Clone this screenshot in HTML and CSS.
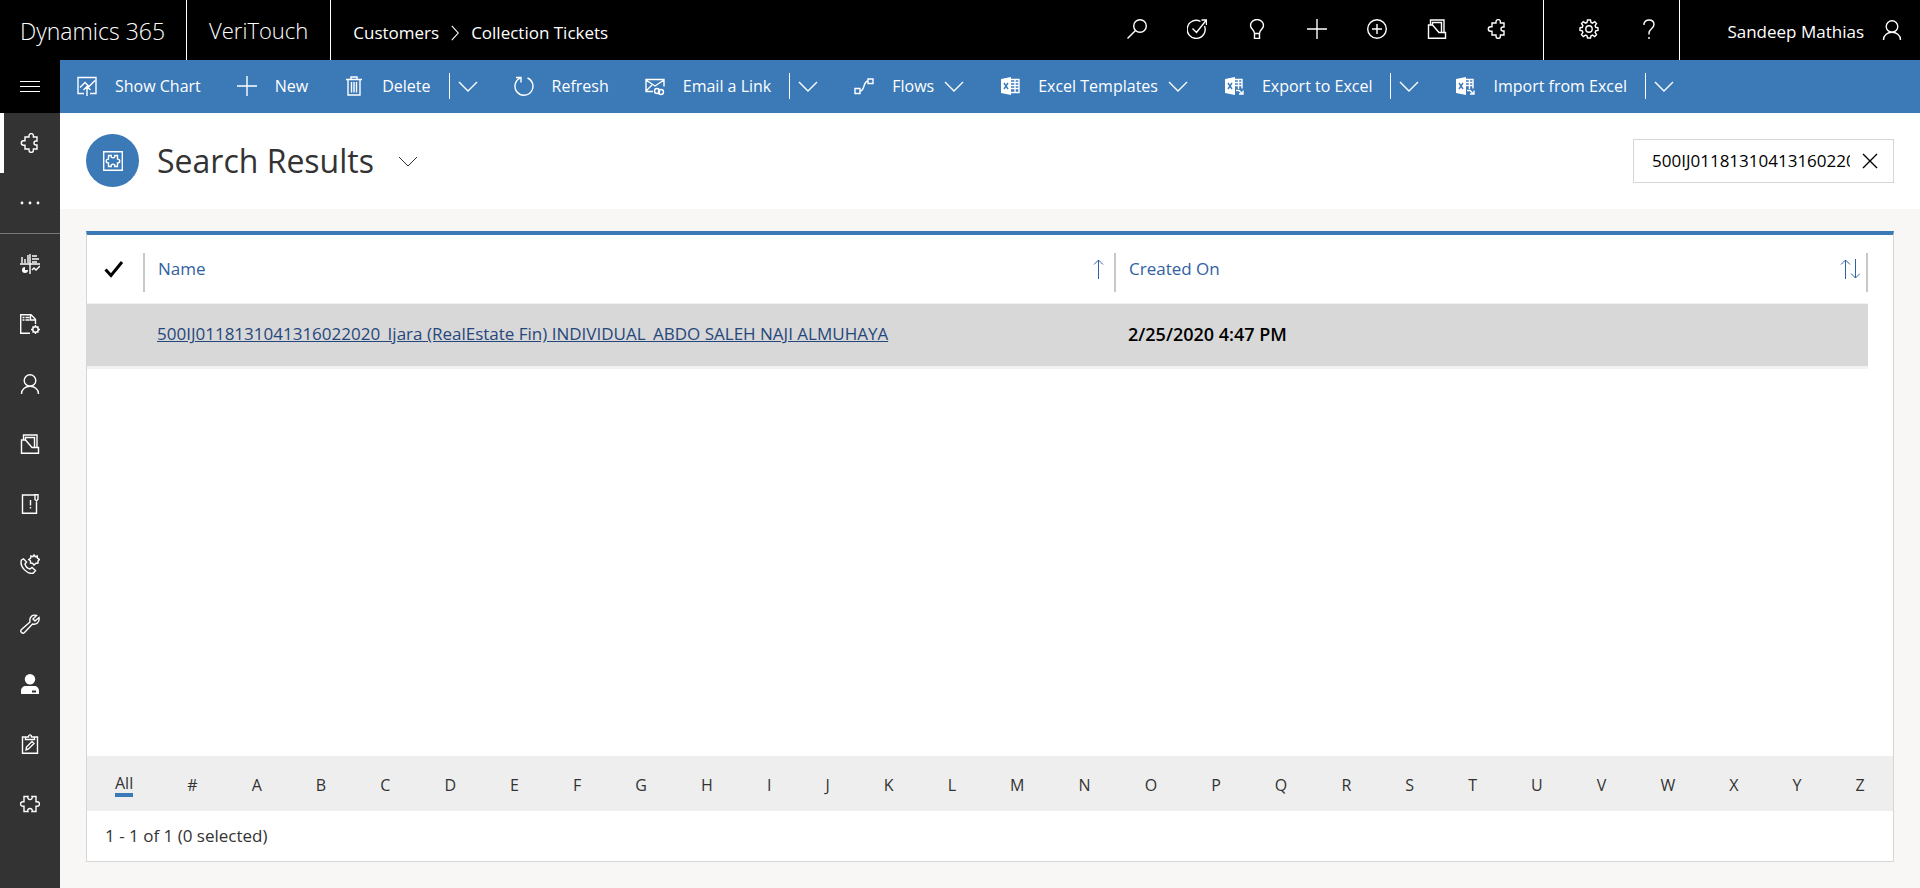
FILE: index.html
```html
<!DOCTYPE html>
<html lang="en"><head><meta charset="utf-8"><title>Collection Tickets</title><link rel="stylesheet" href="styles.css"></head>
<body>
<svg class="defs" aria-hidden="true"><defs>
<symbol id="search" viewBox="0 0 20 20"><circle cx="13" cy="7" r="6.300"/><path d="M8.500 11.500 .5 19.500"/></symbol>
<symbol id="task" viewBox="0 0 20 20"><path d="M17.500 7a9 9 0 1 1-4-4.500M5.500 9.500l4 4L19 1.500M14.500 1h5v5"/></symbol>
<symbol id="bulb" viewBox="0 0 20 20"><path d="M7.500 14.500c0-4-4-4.500-4-8a6.500 6 0 0 1 13 0c0 3.500-4 4-4 8zM7.500 14.500v5h5v-5"/></symbol>
<symbol id="plus" viewBox="0 0 20 20"><path d="M10 0v20M0 10h20"/></symbol>
<symbol id="pluscircle" viewBox="0 0 20 20"><circle cx="10" cy="10" r="9.300"/><path d="M10 5v10M5 10h10"/></symbol>
<symbol id="folder" viewBox="0 0 20 20"><path d="M1.500 19.300V6h4l6.500 7.500h6.500v5.800zM3.500 6V1h13.500v12.500M5.500 6V3.500h9v10"/></symbol>
<symbol id="puzzle" viewBox="0 0 20 20"><path d="M5 4h4V2.800a2.200 2.200 0 0 1 4.400 0V4H17v4h-1a2 2 0 0 0 0 4h1v4h-3.600v1.200a2.200 2.200 0 0 1-4.400 0V16H5v-3.800H3.500a2.200 2.200 0 0 1 0-4.400H5z"/></symbol>
<symbol id="puzzle2" viewBox="0 0 20 20"><path d="M4 2.500h4c-1.500 4 5.500 4 4 0h4v5.200h1.200a2.300 2.300 0 0 1 0 4.600H16v5.200h-4c1.500-4-5.500-4-4 0H4v-5.200H2.800a2.300 2.300 0 0 1 0-4.600H4z"/></symbol>
<symbol id="gear" viewBox="0 0 20 20"><path d="M8.500 1h3l.5 2.500 1.500.6 2.200-1.400 1.800 1.800-1.400 2.200.7 1.600 2.200.5v2.600l-2.300.5-.6 1.600 1.400 2.200-1.800 1.800-2.200-1.400-1.500.7-.5 2.200h-3L8 16.800l-1.500-.7-2.200 1.400-1.800-1.800 1.400-2.200-.6-1.600L1 11.400V8.800l2.300-.5.6-1.600-1.400-2.200 1.800-1.800 2.200 1.400L8 3.500z"/><circle cx="10" cy="10" r="3.200"/></symbol>
<symbol id="help" viewBox="0 0 20 20"><path d="M5 6V4.500C6 1.500 8 1 10 1c3 0 5 1.500 5 4.500 0 4-5 4.500-5 8.500v1.500M10 18v2"/></symbol>
<symbol id="person" viewBox="0 0 20 20"><circle cx="10" cy="6.500" r="5.800"/><path d="M1.500 20c0-10.300 17-10.300 17 0"/></symbol>
<symbol id="chart" viewBox="0 0 20 20"><path d="M7 17.500H1v-16h18v16h-6M3 11.500l5-5 4 4 6-6M10 20v-9M6.500 14 10 10.500l3.500 3.500"/></symbol>
<symbol id="trash" viewBox="0 0 20 20"><path d="M2 3.500h16M7 3V1h6v2M4 4v15h12V4M7.500 6v10.500M10 6v10.500M12.500 6v10.500"/></symbol>
<symbol id="refresh" viewBox="0 0 20 20"><path d="M13.500 2A9 9 0 1 1 6 2.200M2 1.500h5v5"/></symbol>
<symbol id="mail" viewBox="0 0 20 20"><path d="M8 15.500H1v-12h18v7M1 4l9 6 9-6M1 15l6-6M5 3.500h14"/><circle cx="12" cy="15" r="2.500"/><circle cx="16" cy="16" r="2.500"/></symbol>
<symbol id="flow" viewBox="0 0 20 20"><path d="M1 12.500h5v5H1zM14 3h5v4.500h-5zM6 15c5 0 3-10 8-10"/></symbol>
<symbol id="excel" viewBox="0 0 20 20"><path class="solid" d="M1 3 11 1v18L1 17z"/><path d="M11 3.500h8v13h-8M11 6.500h8M11 9.500h8M11 12.500h8M15 3v13"/><path class="cut" d="m4 7 4 6M8 7l-4 6"/></symbol>
<symbol id="excelio" viewBox="0 0 20 20"><path class="solid" d="M1 3 11 1v18L1 17z"/><path d="M11 3.500h7v9M11 6.500h7M11 9.500h7M14.500 3v10M12 14.500h3l3.500 3.500M19 14.500V18h-4"/><path class="cut" d="m4 7 4 6M8 7l-4 6"/></symbol>
<symbol id="down" viewBox="0 0 20 20"><path d="m1 6 9 9 9-9"/></symbol>
<symbol id="right" viewBox="0 0 20 20"><path d="m6 1 8 9-8 9"/></symbol>
<symbol id="menu" viewBox="0 0 20 20"><path d="M0 4.500h20M0 9.500h20M0 14.500h20"/></symbol>
<symbol id="dots" viewBox="0 0 20 20"><g class="solid"><circle cx="2" cy="10" r="1.400"/><circle cx="10" cy="10" r="1.400"/><circle cx="18" cy="10" r="1.400"/></g></symbol>
<symbol id="dash" viewBox="0 0 20 20"><path d="M10 0v20M0 10h20M2 9V3M5 9V5M8 9V1M12 2h5M12 5h7M12 8h5M12 16l2-2 2 2 4-4"/><path class="solid" d="M5 13a3 3 0 1 0 3 3H5z"/></symbol>
<symbol id="docgear" viewBox="0 0 20 20"><path d="M10 19.300H.7V.7H11l4.500 4.500V10M10.500 1v5H15M2.500 3.500h2M5.500 3.500h4M2.500 6h2M5.500 6h4"/><circle cx="15.500" cy="15.500" r="2.700"/><path d="M15.500 11v2M15.500 18v2M11 15.500h2M18 15.500h2M12.500 12.500l1 1M17.500 17.500l1 1M18.500 12.500l-1 1M13.500 17.500l-1 1"/></symbol>
<symbol id="note" viewBox="0 0 20 20"><path d="M15 1H2.500v18.300h14V8M15 .7h3v4.500L16.500 7 15 5.500zM10.500 6v5.500M10.500 13v1.500"/></symbol>
<symbol id="phone" viewBox="0 0 20 20"><path d="m1.500 6 2-1.200L6.500 8 5 10c.5 2 2.500 4.500 5 5l2-1.500 3.500 3-2 2.500C8 21-1 13 1.500 6zM14 1l1.200 1.700 2-.7.2 2 2 1.500L18 7v2l-2 .2L14 11l-1.500-1.800-2-.2V7L8.800 5.500l1.900-1.400.2-2.100 2 .7z"/></symbol>
<symbol id="wrench" viewBox="0 0 20 20"><path d="M16.500 1.500 13 5l2 2 4-3.500c1 5-3 7.500-6.500 6.500L4.500 18.500c-2 2-5-1-3-3L10 8C9 3 12.500.2 16.500 1.500z"/></symbol>
<symbol id="user" viewBox="0 0 20 20"><path class="solid" fill-rule="evenodd" d="M10 0a5 5 0 1 1 0 10.500A5 5 0 0 1 10 0zM1 20v-3c0-3 2-5 5-5h8c3 0 5 2 5 5v3zM12 16.500V18.500h4v-2z"/></symbol>
<symbol id="clip" viewBox="0 0 20 20"><path d="M6 3H2.500v16.300h15V3H14M5.500 5.500V3h3C8.500.2 11.500.2 11.500 3h3v2.500zM6 16l.5-3 5.500-5.500 2 2L8.500 15z"/></symbol>
<symbol id="entity" viewBox="0 0 20 20"><path d="M.7.700h18.600v18.600H.7zM5.500 4.500h2.700c-1 3 4.600 3 3.600 0h2.700v3.600c3 0 3 3.800 0 3.800v3.600h-2.700c1-3-4.600-3-3.600 0H5.500v-3.600c-3 0-3-3.800 0-3.800z"/></symbol>
<symbol id="close" viewBox="0 0 20 20"><path d="m3 3 14 14M17 3 3 17"/></symbol>
<symbol id="check" viewBox="0 0 20 20"><path d="m1.500 10.500 5.500 6L18 3"/></symbol>
<symbol id="asc" viewBox="0 0 20 20"><path d="M10.500 20V1M6 5.500 10.500 1 15 5.500"/></symbol>
<symbol id="sort" viewBox="0 0 20 20"><path d="M5.500 20V1M1 5.500 5.500 1 10 5.500M15.500 0v19M11 14.500l4.500 4.500 4.500-4.500"/></symbol>
</defs></svg>
<header class="topbar">
<a class="brand" href="#">Dynamics 365</a><a class="app" href="#">VeriTouch</a>
<nav class="crumbs" aria-label="Breadcrumb"><a href="#">Customers</a><svg class="icon small"><use href="#right"/></svg><a href="#">Collection Tickets</a></nav>
<div class="tools">
<button aria-label="Search"><svg class="icon"><use href="#search"/></svg></button><button aria-label="Tasks"><svg class="icon"><use href="#task"/></svg></button><button aria-label="Ideas"><svg class="icon"><use href="#bulb"/></svg></button><button aria-label="Create"><svg class="icon"><use href="#plus"/></svg></button><button aria-label="Quick create"><svg class="icon"><use href="#pluscircle"/></svg></button><button aria-label="Cases"><svg class="icon"><use href="#folder"/></svg></button><button aria-label="Extensions"><svg class="icon"><use href="#puzzle"/></svg></button>
</div>
<div class="tools settings"><button aria-label="Settings"><svg class="icon"><use href="#gear"/></svg></button><button aria-label="Help"><svg class="icon"><use href="#help"/></svg></button></div>
<button class="account"><span>Sandeep Mathias</span><svg class="icon"><use href="#person"/></svg></button>
</header>
<div class="shell">
<nav class="rail" aria-label="Site map">
<button class="menu" aria-label="Menu"><svg class="icon thin"><use href="#menu"/></svg></button>
<a class="active" href="#" aria-label="Collection tickets"><svg class="icon"><use href="#puzzle"/></svg></a>
<a class="more" href="#" aria-label="More"><svg class="icon"><use href="#dots"/></svg></a>
<a href="#" aria-label="Dashboards"><svg class="icon"><use href="#dash"/></svg></a>
<a href="#" aria-label="Templates"><svg class="icon"><use href="#docgear"/></svg></a>
<a href="#" aria-label="Contacts"><svg class="icon"><use href="#person"/></svg></a>
<a href="#" aria-label="Accounts"><svg class="icon"><use href="#folder"/></svg></a>
<a href="#" aria-label="Alerts"><svg class="icon"><use href="#note"/></svg></a>
<a href="#" aria-label="Calls"><svg class="icon"><use href="#phone"/></svg></a>
<a href="#" aria-label="Service"><svg class="icon"><use href="#wrench"/></svg></a>
<a href="#" aria-label="Users"><svg class="icon"><use href="#user"/></svg></a>
<a href="#" aria-label="Surveys"><svg class="icon"><use href="#clip"/></svg></a>
<a href="#" aria-label="Add-ons"><svg class="icon"><use href="#puzzle2"/></svg></a>
</nav>
<div class="content">
<div class="commands" role="toolbar" aria-label="Commands">
<button class="cmd"><svg class="icon"><use href="#chart"/></svg>Show Chart</button>
<button class="cmd"><svg class="icon"><use href="#plus"/></svg>New</button>
<div class="split"><button class="cmd"><svg class="icon"><use href="#trash"/></svg>Delete</button><button class="drop" aria-label="Delete options"><svg class="icon"><use href="#down"/></svg></button></div>
<button class="cmd"><svg class="icon"><use href="#refresh"/></svg>Refresh</button>
<div class="split"><button class="cmd"><svg class="icon"><use href="#mail"/></svg>Email a Link</button><button class="drop" aria-label="Email options"><svg class="icon"><use href="#down"/></svg></button></div>
<button class="cmd"><svg class="icon"><use href="#flow"/></svg>Flows<svg class="icon caret"><use href="#down"/></svg></button>
<button class="cmd"><svg class="icon"><use href="#excel"/></svg>Excel Templates<svg class="icon caret"><use href="#down"/></svg></button>
<div class="split"><button class="cmd"><svg class="icon"><use href="#excelio"/></svg>Export to Excel</button><button class="drop" aria-label="Export options"><svg class="icon"><use href="#down"/></svg></button></div>
<div class="split"><button class="cmd"><svg class="icon"><use href="#excelio"/></svg>Import from Excel</button><button class="drop" aria-label="Import options"><svg class="icon"><use href="#down"/></svg></button></div>
</div>
<div class="heading">
<span class="badge"><svg class="icon"><use href="#entity"/></svg></span>
<h1>Search Results</h1><button class="view" aria-label="Change view"><svg class="icon thin"><use href="#down"/></svg></button>
<div class="find"><input type="text" aria-label="Search records" value="500IJ0118131041316022020"><button aria-label="Clear search"><svg class="icon"><use href="#close"/></svg></button></div>
</div>
<main class="panel">
<div class="gridwrap"><table class="grid">
<thead><tr><th class="pick"><div class="head"><svg class="icon tick"><use href="#check"/></svg></div></th><th class="name"><div class="head">Name<svg class="icon thin"><use href="#asc"/></svg></div></th><th><div class="head">Created On<svg class="icon thin"><use href="#sort"/></svg></div></th></tr></thead>
<tbody><tr><td></td><td><a href="#">500IJ0118131041316022020_Ijara (RealEstate Fin) INDIVIDUAL_ABDO SALEH NAJI ALMUHAYA</a></td><td class="date">2/25/2020 4:47 PM</td></tr></tbody>
</table></div>
<nav class="letters" aria-label="Filter by letter"><a class="on" href="#">All</a><a href="#">#</a><a href="#">A</a><a href="#">B</a><a href="#">C</a><a href="#">D</a><a href="#">E</a><a href="#">F</a><a href="#">G</a><a href="#">H</a><a href="#">I</a><a href="#">J</a><a href="#">K</a><a href="#">L</a><a href="#">M</a><a href="#">N</a><a href="#">O</a><a href="#">P</a><a href="#">Q</a><a href="#">R</a><a href="#">S</a><a href="#">T</a><a href="#">U</a><a href="#">V</a><a href="#">W</a><a href="#">X</a><a href="#">Y</a><a href="#">Z</a></nav>
<div class="status">1 - 1 of 1 (0 selected)</div>
</main>
</div>
</div>
</body></html>
```
FILE: styles.css
```css
* { box-sizing: border-box; }
body { margin: 0; min-height: 100vh; display: flex; flex-direction: column; background: #f8f7f5; color: #333; font: 17px/24px "Open Sans", "Noto Sans", sans-serif; }
button, input { font: inherit; color: inherit; background: none; border: 0; padding: 0; margin: 0; }
a { color: inherit; text-decoration: none; }
.defs { position: absolute; width: 0; height: 0; }
.icon { width: 20px; height: 20px; flex: none; fill: none; stroke: currentColor; stroke-width: 1.4; }
.icon.small { width: 16px; height: 16px; }
.icon.thin { stroke-width: 1; }
.solid { fill: currentColor; stroke: none; }
.cut { stroke: #3b79b7; }

.topbar { height: 60px; display: flex; background: #000; color: #fff; }
.brand, .app { display: flex; align-items: center; border-right: 1px solid #fff; font-weight: 300; }
.brand { padding: 2px 21px 0 20px; font-size: 23px; }
.app { padding: 0 22px; font-size: 22px; }
.crumbs { display: flex; align-items: center; gap: 8px; padding: 6px 0 0 22px; }
.tools { display: flex; margin-left: auto; padding-right: 16px; }
.tools button { width: 60px; height: 58px; display: grid; place-items: center; }
.settings { margin-left: 0; padding: 0 0 0 15px; border-left: 1px solid #fff; border-right: 1px solid #fff; }
.account { display: flex; align-items: center; gap: 18px; padding: 0 18px 0 47px; }
.account span { padding-top: 4px; }

.shell { flex: 1; display: flex; }
.rail { width: 60px; flex: none; background: #333; color: #fff; }
.rail a { height: 60px; display: grid; place-items: center; }
.rail .menu { width: 60px; height: 53px; display: grid; place-items: center; background: #000; }
.rail .active { border-left: 4px solid #fff; padding-right: 4px; }
.rail .more { height: 61px; border-bottom: 1px solid #777; }
.content { flex: 1; min-width: 0; display: flex; flex-direction: column; }

.commands { height: 53px; display: flex; align-items: center; gap: 36px; padding: 0 0 2px 17px; background: #3b79b7; color: #fff; font-size: 16px; }
.cmd { display: flex; align-items: center; gap: 18px; white-space: nowrap; }
.caret { margin-left: -8px; }
.split { display: flex; align-items: center; gap: 18px; }
.drop { height: 26px; padding-left: 8px; display: flex; align-items: center; border-left: 1px solid #fff; }

.heading { height: 96px; display: flex; align-items: center; padding: 0 26px 1px; background: #fff; }
.badge { width: 53px; height: 53px; display: grid; place-items: center; border-radius: 50%; background: #3b79b7; color: #fff; }
h1 { margin: 0 24px 0 18px; font-size: 32px; line-height: 44px; font-weight: 400; }
.view { display: flex; }
.find { width: 261px; height: 44px; margin-left: auto; display: flex; align-items: center; justify-content: space-between; padding: 0 13px 0 18px; border: 1px solid #d6d6d6; color: #000; }
.find input { width: 198px; }
.find button { display: flex; }

.panel { flex: 1; margin: 22px 26px 26px; display: flex; flex-direction: column; background: #fff; border: 1px solid #d6d6d6; border-top: 4px solid #3b79b7; }
.gridwrap { flex: 1; padding-right: 25px; }
.grid { width: 100%; table-layout: fixed; border-collapse: collapse; }
.pick { width: 58px; }
.name { width: 971px; }
th { padding: 18px 0 11px; color: #315fa2; font-weight: 400; }
.head { height: 39px; display: flex; align-items: center; justify-content: space-between; padding: 0 6px 8px 13px; border-right: 2px solid #c8c8c8; }
.pick .head { padding-left: 17px; }
.tick { color: #000; stroke-width: 3; }
td { height: 64px; padding: 0 12px 2px; background: #d8d8d8; border-top: 1px solid #f2f2f2; border-bottom: 3px solid #f2f2f2; color: #000; font-weight: 500; }
td a { color: #26477c; text-decoration: underline; }
.date { font-size: 18px; font-weight: 600; }
.letters { height: 55px; display: flex; align-items: center; justify-content: space-between; padding: 2px 28px 0; background: #eee; font-size: 16px; }
.letters .on { border-bottom: 4px solid #3b79b7; line-height: 20px; }
.status { padding: 13px 18px; }
```
